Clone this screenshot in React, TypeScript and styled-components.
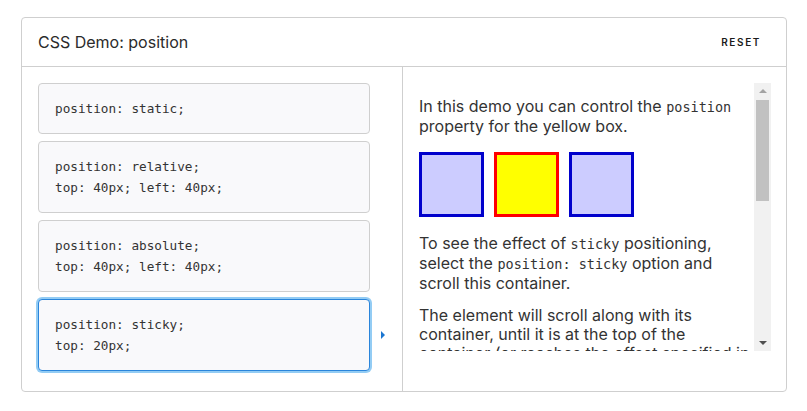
import React, { FC, useState } from 'react';
import styled, { createGlobalStyle } from 'styled-components';

const GlobalStyle = createGlobalStyle`
  body {
    margin: 0;
    background: #fff;
    font-family: Inter, "Noto Sans", sans-serif;
    color: #333;
  }
`;

const OPTIONS: string[][] = [
  ['position: static;'],
  ['position: relative;', 'top: 40px; left: 40px;'],
  ['position: absolute;', 'top: 40px; left: 40px;'],
  ['position: sticky;', 'top: 20px;'],
];

const App: FC = () => {
  const [selected, setSelected] = useState<number>(3);

  return (
    <Page>
      <GlobalStyle />
      <Demo>
        <Header>
          <Title>CSS Demo: position</Title>
          <ResetBtn onClick={() => setSelected(3)}>RESET</ResetBtn>
        </Header>
        <Body>
          <Choices>
            {OPTIONS.map((lines, i) => (
              <Choice key={i} active={i === selected} onClick={() => setSelected(i)}>
                {lines.map(line => (
                  <CodeLine key={line}>{line}</CodeLine>
                ))}
              </Choice>
            ))}
          </Choices>
          <Output>
            <ScrollArea>
              <Content>
                <Para>
                  In this demo you can control the <Code>position</Code> property for the yellow box.
                </Para>
                <Boxes>
                  <Box />
                  <Box example />
                  <Box />
                </Boxes>
                <Para>
                  To see the effect of <Code>sticky</Code> positioning, select the <Code>position: sticky</Code> option and scroll this container.
                </Para>
                <Para>
                  The element will scroll along with its container, until it is at the top of the container (or reaches the offset specified in <Code>top</Code>); it will then stop scrolling, so it stays visible.
                </Para>
                <Para>
                  The rest of this text is only supplied to make sure the container overflows, so as to enable you to scroll it and see the effect.
                </Para>
              </Content>
              <ScrollBar>
                <ScrollBtn dir="up" />
                <Track>
                  <Thumb />
                </Track>
                <ScrollBtn dir="down" />
              </ScrollBar>
            </ScrollArea>
          </Output>
        </Body>
      </Demo>
    </Page>
  );
};

export default App;

const Page = styled.div`
  padding: 17px 0 0 21px;
`;

const Demo = styled.div`
  box-sizing: border-box;
  width: 766px;
  height: 375px;
  border: 1px solid #cfcfcf;
  border-radius: 4px;
  display: flex;
  flex-direction: column;
`;

const Header = styled.div`
  height: 48px;
  flex: none;
  display: flex;
  align-items: center;
  justify-content: space-between;
  padding: 0 25px 0 16px;
  border-bottom: 1px solid #cfcfcf;
`;

const Title = styled.h1`
  margin: 0;
  font-size: 16px;
  font-weight: 400;
  color: #2b2b2b;
`;

const ResetBtn = styled.button`
  border: none;
  background: none;
  padding: 0;
  font-family: Inter, sans-serif;
  font-size: 10px;
  font-weight: 600;
  letter-spacing: 1.6px;
  color: #1b1b1b;
  cursor: pointer;
`;

const Body = styled.div`
  flex: 1;
  display: grid;
  grid-template-columns: 381px 1fr;
  min-height: 0;
`;

const Choices = styled.div`
  border-right: 1px solid #cfcfcf;
  padding: 16px 32px 0 16px;
  display: flex;
  flex-direction: column;
  gap: 7px;
`;

const Choice = styled.div<{ active?: boolean }>`
  position: relative;
  box-sizing: border-box;
  padding: 14px 16px;
  background: #f9f9fb;
  border: 1px solid ${p => (p.active ? '#2a85db' : '#cfcfcf')};
  border-radius: 4px;
  box-shadow: ${p => (p.active ? '0 0 0 2px #93ccf4' : 'none')};
  cursor: pointer;

  &::after {
    content: '';
    display: ${p => (p.active ? 'block' : 'none')};
    position: absolute;
    right: -16px;
    top: 50%;
    margin-top: -4px;
    border-left: 4px solid #1b76d1;
    border-top: 4px solid transparent;
    border-bottom: 4px solid transparent;
  }
`;

const CodeLine = styled.div`
  font-family: "DejaVu Sans Mono", "Liberation Mono", monospace;
  font-size: 12.7px;
  line-height: 21px;
  color: #333;
`;

const Output = styled.div`
  padding: 16px 15px 0 16px;
  min-width: 0;
`;

const ScrollArea = styled.div`
  height: 268px;
  display: flex;
`;

const Content = styled.div`
  flex: 1;
  min-width: 0;
  overflow: hidden;
  padding-top: 14px;
`;

const ScrollBar = styled.div`
  width: 17px;
  flex: none;
  display: flex;
  flex-direction: column;
  background: #f1f1f1;
`;

const ScrollBtn = styled.div<{ dir: 'up' | 'down' }>`
  height: 17px;
  flex: none;
  display: flex;
  align-items: center;
  justify-content: center;

  &::before {
    content: '';
    border-left: 4px solid transparent;
    border-right: 4px solid transparent;
    ${p =>
      p.dir === 'up'
        ? 'border-bottom: 4px solid #a3a3a3; margin-top: -1px;'
        : 'border-top: 4px solid #505050; margin-top: 1px;'}
  }
`;

const Track = styled.div`
  flex: 1;
  padding: 0 2px;
`;

const Thumb = styled.div`
  height: 101px;
  background: #c1c1c1;
`;

const Para = styled.p`
  margin: 0 0 13px;
  font-size: 16px;
  line-height: 19px;
  color: #333;
`;

const Code = styled.code`
  font-family: "DejaVu Sans Mono", monospace;
  font-size: 13.5px;
`;

const Boxes = styled.div`
  display: flex;
  gap: 10px;
  margin: 16px 0 17px;
`;

const Box = styled.div<{ example?: boolean }>`
  box-sizing: border-box;
  width: 65px;
  height: 65px;
  border: 3px solid ${p => (p.example ? '#f00' : '#00c')};
  background: ${p => (p.example ? '#ff0' : '#ccf')};
`;
